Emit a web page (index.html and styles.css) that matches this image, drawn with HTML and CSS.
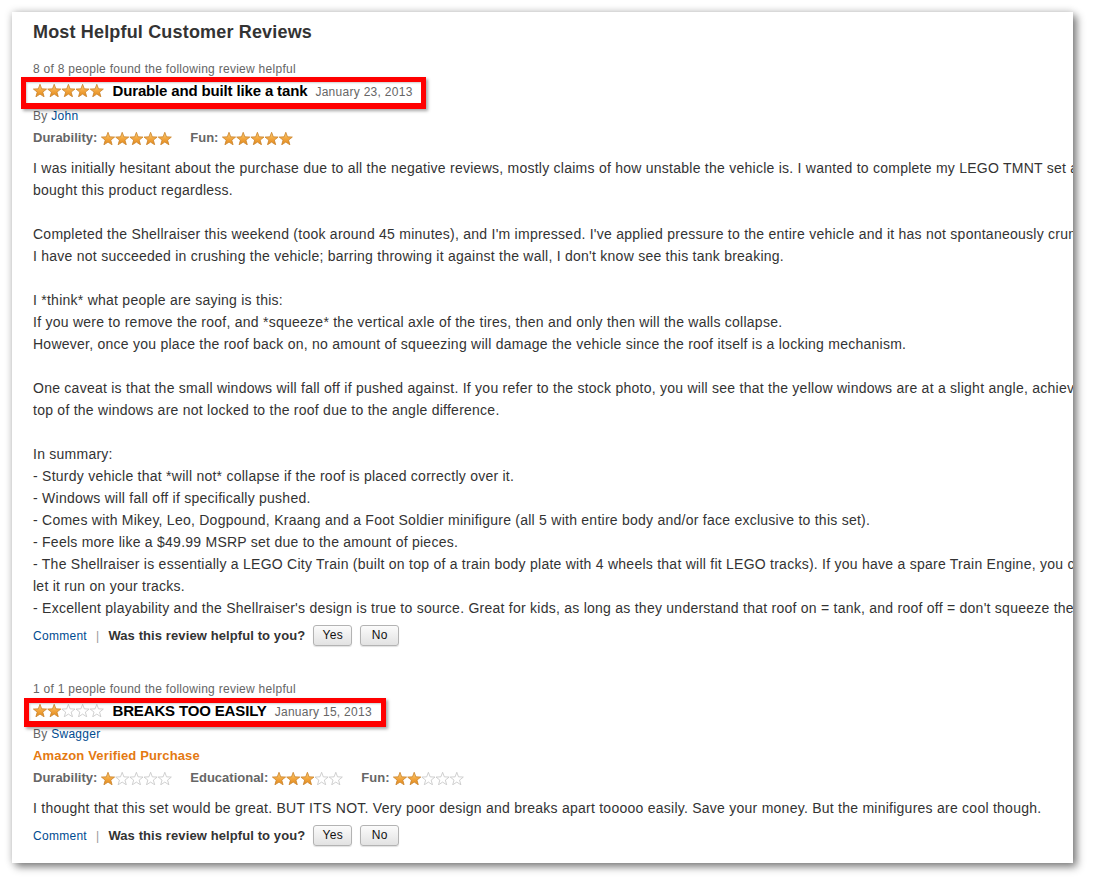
FILE: index.html
```html
<!DOCTYPE html>
<html lang="en">
<head>
<meta charset="utf-8">
<title>Most Helpful Customer Reviews</title>
<link rel="stylesheet" href="styles.css">
</head>
<body>
<svg class="defs" aria-hidden="true">
  <defs>
    <linearGradient id="gold" x1="0" y1="0" x2="0" y2="1">
      <stop offset="0" stop-color="#fbd27a"/>
      <stop offset="0.55" stop-color="#f2a33a"/>
      <stop offset="1" stop-color="#e08a1e"/>
    </linearGradient>
    <symbol id="sf" viewBox="0 0 14 13">
      <polygon points="7,0.3 8.7,4.85 13.6,5.05 9.76,8.1 11.1,12.8 7,10.1 2.9,12.8 4.24,8.1 0.4,5.05 5.3,4.85" fill="url(#gold)" stroke="#c9822a" stroke-width="0.8" stroke-linejoin="round"/>
    </symbol>
    <symbol id="se" viewBox="0 0 14 13">
      <polygon points="7,0.3 8.7,4.85 13.6,5.05 9.76,8.1 11.1,12.8 7,10.1 2.9,12.8 4.24,8.1 0.4,5.05 5.3,4.85" fill="#fff" stroke="#c4c4c4" stroke-width="0.8" stroke-linejoin="round"/>
    </symbol>
  </defs>
</svg>

<div class="page">
  <div class="panel">
    <h2 class="heading">Most Helpful Customer Reviews</h2>

    <div class="review">
      <div class="helpful">8 of 8 people found the following review helpful</div>
      <div class="title-row mark mark-a">
        <svg class="stars" viewBox="0 0 71 13"><use href="#sf" x="0" width="14" height="13"/><use href="#sf" x="14.2" width="14" height="13"/><use href="#sf" x="28.4" width="14" height="13"/><use href="#sf" x="42.6" width="14" height="13"/><use href="#sf" x="56.8" width="14" height="13"/></svg>
        <span class="title">Durable and built like a tank</span>
        <span class="date">January 23, 2013</span>
      </div>
      <div class="byline">By <a class="link" href="#">John</a></div>
      <div class="ratings">
        <span class="rating"><span class="label">Durability:</span><svg class="stars" viewBox="0 0 71 13"><use href="#sf" x="0" width="14" height="13"/><use href="#sf" x="14.2" width="14" height="13"/><use href="#sf" x="28.4" width="14" height="13"/><use href="#sf" x="42.6" width="14" height="13"/><use href="#sf" x="56.8" width="14" height="13"/></svg></span>
        <span class="rating"><span class="label">Fun:</span><svg class="stars" viewBox="0 0 71 13"><use href="#sf" x="0" width="14" height="13"/><use href="#sf" x="14.2" width="14" height="13"/><use href="#sf" x="28.4" width="14" height="13"/><use href="#sf" x="42.6" width="14" height="13"/><use href="#sf" x="56.8" width="14" height="13"/></svg></span>
      </div>
      <div class="body">I was initially hesitant about the purchase due to all the negative reviews, mostly claims of how unstable the vehicle is. I wanted to complete my LEGO TMNT set and<br>bought this product regardless.<br><br>Completed the Shellraiser this weekend (took around 45 minutes), and I'm impressed. I've applied pressure to the entire vehicle and it has not spontaneously crumbled.<br>I have not succeeded in crushing the vehicle; barring throwing it against the wall, I don't know see this tank breaking.<br><br>I *think* what people are saying is this:<br>If you were to remove the roof, and *squeeze* the vertical axle of the tires, then and only then will the walls collapse.<br>However, once you place the roof back on, no amount of squeezing will damage the vehicle since the roof itself is a locking mechanism.<br><br>One caveat is that the small windows will fall off if pushed against. If you refer to the stock photo, you will see that the yellow windows are at a slight angle, achieved by<br>top of the windows are not locked to the roof due to the angle difference.<br><br>In summary:<br>- Sturdy vehicle that *will not* collapse if the roof is placed correctly over it.<br>- Windows will fall off if specifically pushed.<br>- Comes with Mikey, Leo, Dogpound, Kraang and a Foot Soldier minifigure (all 5 with entire body and/or face exclusive to this set).<br>- Feels more like a $49.99 MSRP set due to the amount of pieces.<br>- The Shellraiser is essentially a LEGO City Train (built on top of a train body plate with 4 wheels that will fit LEGO tracks). If you have a spare Train Engine, you can<br>let it run on your tracks.<br>- Excellent playability and the Shellraiser's design is true to source. Great for kids, as long as they understand that roof on = tank, and roof off = don't squeeze the walls.</div>
      <div class="actions">
        <a class="link" href="#">Comment</a><span class="sep">|</span><span class="ask">Was this review helpful to you?</span><span class="btn">Yes</span><span class="btn">No</span>
      </div>
    </div>

    <div class="review">
      <div class="helpful">1 of 1 people found the following review helpful</div>
      <div class="title-row mark mark-b">
        <svg class="stars" viewBox="0 0 71 13"><use href="#sf" x="0" width="14" height="13"/><use href="#sf" x="14.2" width="14" height="13"/><use href="#se" x="28.4" width="14" height="13"/><use href="#se" x="42.6" width="14" height="13"/><use href="#se" x="56.8" width="14" height="13"/></svg>
        <span class="title">BREAKS TOO EASILY</span>
        <span class="date">January 15, 2013</span>
      </div>
      <div class="byline">By <a class="link" href="#">Swagger</a></div>
      <div class="verified">Amazon Verified Purchase</div>
      <div class="ratings">
        <span class="rating"><span class="label">Durability:</span><svg class="stars" viewBox="0 0 71 13"><use href="#sf" x="0" width="14" height="13"/><use href="#se" x="14.2" width="14" height="13"/><use href="#se" x="28.4" width="14" height="13"/><use href="#se" x="42.6" width="14" height="13"/><use href="#se" x="56.8" width="14" height="13"/></svg></span>
        <span class="rating"><span class="label">Educational:</span><svg class="stars" viewBox="0 0 71 13"><use href="#sf" x="0" width="14" height="13"/><use href="#sf" x="14.2" width="14" height="13"/><use href="#sf" x="28.4" width="14" height="13"/><use href="#se" x="42.6" width="14" height="13"/><use href="#se" x="56.8" width="14" height="13"/></svg></span>
        <span class="rating"><span class="label">Fun:</span><svg class="stars" viewBox="0 0 71 13"><use href="#sf" x="0" width="14" height="13"/><use href="#sf" x="14.2" width="14" height="13"/><use href="#se" x="28.4" width="14" height="13"/><use href="#se" x="42.6" width="14" height="13"/><use href="#se" x="56.8" width="14" height="13"/></svg></span>
      </div>
      <div class="body">I thought that this set would be great. BUT ITS NOT. Very poor design and breaks apart tooooo easily. Save your money. But the minifigures are cool though.</div>
      <div class="actions">
        <a class="link" href="#">Comment</a><span class="sep">|</span><span class="ask">Was this review helpful to you?</span><span class="btn">Yes</span><span class="btn">No</span>
      </div>
    </div>
  </div>
</div>
</body>
</html>
```

FILE: styles.css
```css
body {
  margin: 0;
  background: #fff;
  font-family: "Liberation Sans", Arial, sans-serif;
}

.defs {
  position: absolute;
  width: 0;
  height: 0;
  overflow: hidden;
}

.page {
  padding: 12px 20px 21px 12px;
}

.panel {
  width: 1061px;
  height: 851px;
  box-sizing: border-box;
  padding: 9px 0 0 21px;
  background: #fff;
  overflow: hidden;
  box-shadow: 0 0 8px rgba(0, 0, 0, 0.2), 4px 4px 8px rgba(0, 0, 0, 0.45);
}

.heading {
  margin: 0 0 18px;
  font-size: 18px;
  line-height: 22px;
  font-weight: bold;
  color: #333;
  letter-spacing: 0.17px;
}

.review + .review {
  margin-top: 35px;
}

.helpful {
  font-size: 12px;
  line-height: 16px;
  color: #666;
  letter-spacing: 0.28px;
}

.title-row {
  position: relative;
  display: flex;
  align-items: baseline;
  width: fit-content;
  margin-top: 5px;
  line-height: 18px;
}

.stars {
  width: 71px;
  height: 13px;
  flex: none;
}

.title-row .stars {
  align-self: flex-start;
  margin: 2px 8.5px 0 0;
}

.title {
  font-size: 15px;
  font-weight: bold;
  color: #000;
  letter-spacing: -0.15px;
  margin-right: 8px;
}

.date {
  font-size: 12px;
  color: #666;
  letter-spacing: 0.28px;
}

.mark::after {
  content: "";
  position: absolute;
  border: 5px solid #f00;
  border-bottom-width: 6px;
  box-shadow: 2px 2px 3px rgba(0, 0, 0, 0.35), inset 1px 1px 2px rgba(0, 0, 0, 0.2);
  pointer-events: none;
}

.mark-a::after {
  top: -5px;
  bottom: -8px;
  left: -12px;
  right: -13px;
}

.mark-b {
  margin-bottom: -2px;
}

.mark-b::after {
  top: -4px;
  bottom: -6px;
  left: -9px;
  right: -14.5px;
}

.byline {
  margin-top: 4px;
  font-size: 12px;
  line-height: 22px;
  color: #666;
  letter-spacing: 0.28px;
}

.link {
  color: #004b91;
  text-decoration: none;
}

.verified {
  font-size: 13px;
  line-height: 22px;
  font-weight: bold;
  color: #e47911;
  letter-spacing: 0.15px;
}

.ratings {
  display: flex;
  gap: 18px;
  font-size: 13px;
  line-height: 22px;
}

.rating {
  display: flex;
  align-items: center;
  gap: 4px;
}

.rating .label {
  font-weight: bold;
  color: #666;
}

.body {
  margin-top: 8px;
  font-size: 14px;
  line-height: 22px;
  color: #333;
  white-space: nowrap;
  letter-spacing: 0.25px;
}

.actions {
  display: flex;
  align-items: center;
  height: 21px;
  margin-top: 6px;
  font-size: 12px;
  letter-spacing: 0.28px;
}

.sep {
  margin: 0 9px;
  color: #999;
}

.ask {
  margin-right: 8px;
  font-size: 13px;
  font-weight: bold;
  color: #333;
  letter-spacing: 0.1px;
}

.btn {
  box-sizing: border-box;
  width: 39px;
  height: 21px;
  margin-right: 8px;
  border: 1px solid #b3b3b3;
  border-radius: 3px;
  background: linear-gradient(#fbfbfb, #e2e2e2);
  box-shadow: 0 1px 1px rgba(0, 0, 0, 0.12);
  font-size: 12px;
  line-height: 19px;
  text-align: center;
  color: #111;
}
```
